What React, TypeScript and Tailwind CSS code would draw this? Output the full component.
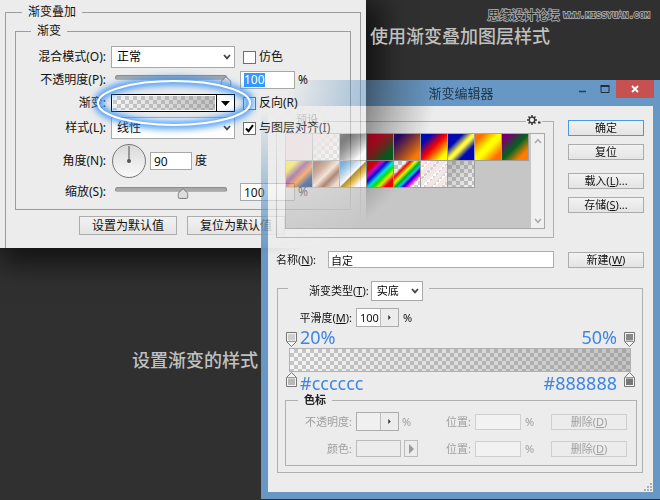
import { useId, useState, type ReactNode } from "react";

const PRESETS = [
  "bg-linear-to-br from-[#f0c9cc] to-[#ece2e2]",
  "bg-[linear-gradient(135deg,#f3e0e0,#f3e0e000),repeating-conic-gradient(#d0d0d0_0_25%,#fff_0_50%)] bg-size-[auto,8px_8px]",
  "bg-linear-to-br from-[#111] from-20% to-white to-80%",
  "bg-[linear-gradient(135deg,#d8001e_30%,#7a2a1e_55%,#00641e_80%)]",
  "bg-[linear-gradient(135deg,#28006e_15%,#8c3c32_48%,#ff7c00_85%)]",
  "bg-[linear-gradient(135deg,#000ab4_20%,#ff0000_50%,#ffff00_85%)]",
  "bg-[linear-gradient(135deg,#000ab4_28%,#fff83c_48%,#fff83c_54%,#000ab4_72%)]",
  "bg-[linear-gradient(135deg,#ff6e00_15%,#ffff00_45%,#ffff00_55%,#ff6e00_85%)]",
  "bg-[linear-gradient(135deg,#78006e_15%,#00641e_50%,#ff7c00_80%)]",
  "bg-[linear-gradient(135deg,#f9e600_20%,#6f157b_42%,#fd7c00_60%,#002874_80%)]",
  "bg-[linear-gradient(135deg,#7a3c20_10%,#b07a60_30%,#fbdcc8_50%,#8a4a30_68%,#f0d4c0_88%)]",
  "bg-[linear-gradient(135deg,#2989cc_10%,#ffffff_48%,#906a00_52%,#d99f00_62%,#ffffff_80%)]",
  "bg-[linear-gradient(135deg,#ff0000_20%,#ff00ff_30%,#0000ff_40%,#00ffff_52%,#00ff00_62%,#ffff00_72%,#ff0000_84%)]",
  "bg-[linear-gradient(135deg,transparent_24%,#ff0000_32%,#ffff00_42%,#00b400_52%,#00c8ff_60%,#0000c8_67%,#dc00dc_74%,transparent_84%),repeating-conic-gradient(#d0d0d0_0_25%,#fff_0_50%)] bg-size-[auto,8px_8px]",
  "bg-[repeating-linear-gradient(135deg,#f5e6e6_0_4px,#f5e6e600_5px_7px),repeating-conic-gradient(#d8d0d0_0_25%,#fff_0_50%)] bg-size-[auto,6px_6px]",
  "bg-[linear-gradient(135deg,#88888899,#cccccc33),repeating-conic-gradient(#c0c0c0_0_25%,#fff_0_50%)] bg-size-[auto,8px_8px]",
];

const editorButton =
  "h-4 w-full border border-[#acacac] bg-linear-to-b from-[#f2f2f2] to-[#e4e4e4] text-[11px] leading-3 text-[#111]";

function Chevron({ className = "" }: { className?: string }) {
  return (
    <svg viewBox="0 0 8 6" className={`pointer-events-none h-[6px] w-2 ${className}`}>
      <path d="M1 1 L4 4.4 L7 1" fill="none" stroke="#444" strokeWidth="1.8" />
    </svg>
  );
}

function PickList({ id, value, className }: { id: string; value: string; className: string }) {
  return (
    <div className={`relative ${className}`}>
      <select
        id={id}
        className="h-full w-full appearance-none border border-[#a8a8a8] bg-white pl-[5px] text-black"
      >
        <option>{value}</option>
      </select>
      <Chevron className="absolute top-1/2 right-1 -translate-y-1/2" />
    </div>
  );
}

function Check({ label, checked = false }: { label: string; checked?: boolean }) {
  return (
    <label className="flex items-center gap-[3px] pl-[3px] whitespace-nowrap">
      <span className="relative size-[13px] shrink-0">
        <input
          type="checkbox"
          defaultChecked={checked}
          className="peer block size-[13px] appearance-none border border-[#707070] bg-white"
        />
        <svg
          viewBox="0 0 13 13"
          className="pointer-events-none absolute inset-0 hidden size-[13px] peer-checked:block"
        >
          <path d="M3 6.5 L5.5 9.2 L10 3.2" fill="none" stroke="#000" strokeWidth="2" />
        </svg>
      </span>
      {label}
    </label>
  );
}

function Slider({ id, initial }: { id: string; initial: number }) {
  const [value, setValue] = useState(initial);
  return (
    <div className="relative mr-2 ml-1 h-4">
      <div className="mt-[3px] h-[5px] rounded-full border border-[#8c8c8c] border-b-[#b4b4b4] bg-[#a9a9a9]" />
      <svg
        viewBox="0 0 11 11"
        className="absolute top-1 size-[11px] -translate-x-1/2"
        style={{ left: `${value}%` }}
      >
        <path d="M5.5 0.6 L10.4 5.4 V9 Q10.4 10.4 9 10.4 H2 Q0.6 10.4 0.6 9 V5.4 Z" fill="#dedede" stroke="#777" />
      </svg>
      <input
        id={id}
        type="range"
        value={value}
        onChange={(e) => setValue(Number(e.target.value))}
        className="absolute inset-0 w-full opacity-0"
      />
    </div>
  );
}

function OverlayPanel() {
  const id = useId();
  return (
    <section className="absolute top-0 left-0 w-[366px] bg-[#ececec] px-[5px] pt-1 text-[12px] leading-4 text-[#111] shadow-[8px_8px_26px_8px_rgba(0,0,0,0.6)]">
      <fieldset className="min-w-0 border border-b-0 border-[#9c9c9c] px-[9px] pb-[13px]">
        <legend className="ml-[7px] px-[6px]">渐变叠加</legend>
        <fieldset className="mt-[3px] min-w-0 border border-[#9c9c9c] pt-[7px] pb-[5px]">
          <legend className="ml-[15px] px-[6px]">渐变</legend>
          <div className="grid grid-cols-[90px_124px_1fr] grid-rows-[22px_24px_22px_28px_38px_24px] items-center gap-x-[5px]">
            <label htmlFor={`${id}-mode`} className="text-right">混合模式(O):</label>
            <PickList id={`${id}-mode`} value="正常" className="h-[22px]" />
            <Check label="仿色" />

            <label htmlFor={`${id}-opacity`} className="text-right">不透明度(P):</label>
            <Slider id={`${id}-opacity`} initial={99} />
            <label className="flex items-center gap-[3px]">
              <span className="flex h-[18px] w-[55px] items-center border border-[#a8a8a8] bg-white pl-[3px]">
                <input
                  aria-label="不透明度"
                  defaultValue="100"
                  className="h-[14px] w-[21px] bg-[#3399ff] text-white"
                />
              </span>
              %
            </label>

            <span className="text-right">渐变:</span>
            <button
              type="button"
              aria-label="渐变"
              className="flex h-[18px] border border-black bg-white outline-none"
            >
              <span className="h-full flex-1 border border-white bg-[linear-gradient(90deg,#cccccc33,#88888880),repeating-conic-gradient(#c8c8c8_0_25%,#fff_0_50%)] bg-size-[auto,8px_8px]" />
              <span className="flex h-full w-[18px] items-center justify-center border-l border-black">
                <svg viewBox="0 0 9 5" className="h-[5px] w-[9px]">
                  <path d="M0 0 H9 L4.5 5 Z" fill="#000" />
                </svg>
              </span>
            </button>
            <Check label="反向(R)" />

            <label htmlFor={`${id}-style`} className="text-right">样式(L):</label>
            <PickList id={`${id}-style`} value="线性" className="h-[22px]" />
            <Check label="与图层对齐(I)" checked />

            <label htmlFor={`${id}-angle`} className="text-right">角度(N):</label>
            <div className="flex items-center gap-[3px] whitespace-nowrap">
              <svg viewBox="0 0 36 36" className="size-9 shrink-0">
                <defs>
                  <linearGradient id="dial" x1="0" y1="0" x2="0" y2="1">
                    <stop offset="0" stopColor="#d9d9d9" />
                    <stop offset="1" stopColor="#fafafa" />
                  </linearGradient>
                </defs>
                <circle cx="18" cy="18" r="16.5" fill="url(#dial)" stroke="#777" />
                <path d="M18 18 V3" stroke="#777" strokeWidth="1.4" />
                <circle cx="18" cy="18" r="2" fill="#555" />
              </svg>
              <input
                id={`${id}-angle`}
                defaultValue="90"
                className="h-[18px] w-[42px] shrink-0 border border-[#a8a8a8] bg-white px-[3px]"
              />
              度
            </div>
            <span />

            <label htmlFor={`${id}-scale`} className="text-right">缩放(S):</label>
            <Slider id={`${id}-scale`} initial={61} />
            <label className="flex items-center gap-[3px]">
              <input
                aria-label="缩放"
                defaultValue="100"
                className="h-[18px] w-[55px] border border-[#a8a8a8] bg-white px-[3px]"
              />
              %
            </label>
          </div>
        </fieldset>
        <div className="mt-[6px] flex gap-[10px] pl-16">
          <button type="button" className="h-[19px] w-[98px] border border-[#acacac] bg-linear-to-b from-[#f2f2f2] to-[#e4e4e4]">
            设置为默认值
          </button>
          <button type="button" className="h-[19px] w-[98px] border border-[#acacac] bg-linear-to-b from-[#f2f2f2] to-[#e4e4e4]">
            复位为默认值
          </button>
        </div>
      </fieldset>

      {/* highlight ring round the gradient picker */}
      <svg viewBox="0 0 190 70" className="pointer-events-none absolute top-[68px] left-[79px] h-[70px] w-[190px]">
        <defs>
          <filter id="glow" x="-20%" y="-40%" width="140%" height="180%">
            <feGaussianBlur stdDeviation="3.5" />
          </filter>
        </defs>
        <ellipse cx="95" cy="35" rx="76" ry="22" fill="none" stroke="#2f8cf5" strokeWidth="7" filter="url(#glow)" />
        <ellipse cx="95" cy="35" rx="76" ry="22" fill="none" stroke="#fff" strokeWidth="2.2" />
      </svg>
    </section>
  );
}

function ColorStop({ color, down = false }: { color: string; down?: boolean }) {
  return (
    <svg viewBox="0 0 11 15" className="h-[15px] w-[11px]">
      <g transform={down ? "matrix(1 0 0 -1 0 15)" : undefined}>
        <path d="M0.5 5.5 L5.5 0.5 L10.5 5.5 V14.5 H0.5 Z" fill="#f4f4f4" stroke="#777" />
        <path d="M0.5 5.5 H10.5" stroke="#999" />
        <rect x="2" y="6.5" width="7" height="6.5" fill={color} />
      </g>
    </svg>
  );
}

function Spinner({ label, value = "", disabled = false }: { label: string; value?: string; disabled?: boolean }) {
  return (
    <span className="flex h-[19px] w-[43px] border border-[#acacac]">
      <input
        aria-label={label}
        defaultValue={value}
        disabled={disabled}
        className={`w-6 border-r border-[#bcbcbc] pl-[3px] ${disabled ? "bg-[#f0f0f0]" : "bg-white"}`}
      />
      <button type="button" aria-label={`${label} ▸`} disabled={disabled} className="flex flex-1 items-center justify-center">
        <svg viewBox="0 0 3 6" className="h-[5px] w-[3px]">
          <path d="M0 0 L3 3 L0 6 Z" fill="#333" />
        </svg>
      </button>
    </span>
  );
}

function StopRow({ label, children }: { label: string; children: ReactNode }) {
  const id = useId();
  return (
    <div className="grid h-[19px] grid-cols-[66px_80px_1fr_46px_22px_76px] items-center gap-1 whitespace-nowrap">
      <span className="text-right">{label}</span>
      <div className="flex items-center gap-[3px]">{children}</div>
      <label htmlFor={id} className="text-right">位置:</label>
      <input id={id} disabled className="h-4 w-full border border-[#cfcfcf] bg-[#f2f2f2]" />
      <span>%</span>
      <button type="button" disabled className="h-4 border border-[#cfcfcf] text-[11px] leading-3">
        删除(<u>D</u>)
      </button>
    </div>
  );
}

function GradientEditor() {
  const id = useId();
  return (
    <section className="absolute top-20 right-0 left-[261px] bg-[#6798c5] px-[7px] pb-[7px] text-[11px] leading-[14px] text-[#111] [mask-image:radial-gradient(circle_at_0_0,transparent_30px,black_175px)]">
      <header className="relative -mr-px flex h-[26px] items-start justify-end">
        <h2 className="absolute inset-x-0 top-[5px] text-center text-[13px] leading-4 text-[#1f3346]">
          渐变编辑器
        </h2>
        <button type="button" aria-label="最小化" className="flex h-[18px] w-[26px] items-center justify-center">
          <svg viewBox="0 0 10 10" className="size-[10px]">
            <path d="M1 7.5 H8" stroke="#26445f" strokeWidth="1.6" />
          </svg>
        </button>
        <button type="button" aria-label="最大化" className="flex h-[18px] w-[18px] items-center justify-center">
          <svg viewBox="0 0 10 10" className="size-[10px]">
            <path d="M1 2.5 H9 V8.5 H1 Z" fill="none" stroke="#1d2f40" />
            <path d="M0.5 2 H9.5" stroke="#1d2f40" strokeWidth="2" />
          </svg>
        </button>
        <button type="button" aria-label="关闭" className="ml-[2px] flex h-[18px] w-[38px] items-center justify-center bg-[#c75050]">
          <svg viewBox="0 0 8 8" className="size-2">
            <path d="M1 1 L7 7 M7 1 L1 7" stroke="#fff" strokeWidth="1.8" />
          </svg>
        </button>
      </header>

      <div className="relative bg-[#ececec] pt-[7px] pr-[9px] pb-[19px] pl-2">
        <div className="flex gap-[14px]">
          <fieldset className="relative min-w-0 flex-1 border border-[#b0b0b0] px-2 pt-1 pb-2">
            <legend className="ml-[6px] h-4 px-[5px]">预设</legend>
            <button
              type="button"
              aria-label="预设选项"
              className="absolute -top-[15px] right-[11px] flex items-end bg-[#ececec] px-px"
            >
              <svg viewBox="0 0 14 12" className="h-3 w-[14px]">
                <circle cx="5" cy="6" r="2.8" fill="none" stroke="#333" strokeWidth="1.3" />
                <path
                  d="M5 1 V3 M5 9 V11 M0 6 H2 M8 6 H10 M1.5 2.5 L3 4 M7 8 L8.5 9.5 M8.5 2.5 L7 4 M3 8 L1.5 9.5"
                  stroke="#333"
                  strokeWidth="1.5"
                />
                <rect x="11" y="7.5" width="2.5" height="2" fill="#333" />
              </svg>
            </button>
            <div className="flex h-24 border border-[#a8a8a8] bg-[#c6c6c6]">
              <div className="flex flex-1 flex-wrap content-start">
                {PRESETS.map((fill) => (
                  <button
                    key={fill}
                    type="button"
                    aria-label="预设"
                    className={`size-[27px] border-r border-b border-[#a0a0a0] ${fill}`}
                  />
                ))}
              </div>
              <div className="flex w-[13px] flex-col items-center justify-between bg-[#f0f0f0] py-1">
                <svg viewBox="0 0 8 6" className="h-[6px] w-2">
                  <path d="M1 5 L4 1.6 L7 5" fill="none" stroke="#aaa" strokeWidth="1.6" />
                </svg>
                <svg viewBox="0 0 8 6" className="h-[6px] w-2">
                  <path d="M1 1 L4 4.4 L7 1" fill="none" stroke="#aaa" strokeWidth="1.6" />
                </svg>
              </div>
            </div>
          </fieldset>
          <div className="flex w-[76px] flex-col gap-2 pt-[7px]">
            <button type="button" className="h-4 border border-[#4a98e8] bg-linear-to-b from-[#f2f2f2] to-[#e4e4e4] text-[11px] leading-3">
              确定
            </button>
            <button type="button" className={editorButton}>复位</button>
            <button type="button" className={`mt-[5px] ${editorButton}`}>载入(<u>L</u>)...</button>
            <button type="button" className={editorButton}>存储(<u>S</u>)...</button>
          </div>
        </div>

        <div className="mt-[13px] flex items-center gap-[14px]">
          <div className="flex flex-1 items-center">
            <label htmlFor={`${id}-name`} className="w-[52px]">
              名称(<u>N</u>):
            </label>
            <input
              id={`${id}-name`}
              defaultValue="自定"
              className="h-[17px] min-w-0 flex-1 border border-[#acacac] bg-white px-[2px]"
            />
          </div>
          <div className="w-[76px]">
            <button type="button" className={editorButton}>新建(<u>W</u>)</button>
          </div>
        </div>

        <fieldset className="mt-[7px] mr-px ml-px min-w-0 border border-[#b0b0b0] pt-[7px] pr-[5px] pb-[6px] pl-[7px]">
          <legend className="ml-[3px] flex h-[26px] items-end gap-[2px] pr-[6px] pl-[21px]">
            <label htmlFor={`${id}-type`} className="pb-[3px]">
              渐变类型(<u>T</u>):
            </label>
            <PickList id={`${id}-type`} value="实底" className="h-5 w-[52px]" />
          </legend>
          <div className="flex items-center gap-1">
            <span className="w-[67px] text-right">
              平滑度(<u>M</u>):
            </span>
            <Spinner label="平滑度" value="100" />
            <span>%</span>
          </div>

          <div className="flex h-5 items-end justify-between pr-[2px] pl-px text-[18px] leading-5 text-[#3f86e4]">
            <span className="flex items-end gap-[3px]">
              <ColorStop color="#cfcfcf" down />
              20%
            </span>
            <span className="flex items-end gap-[7px]">
              50%
              <ColorStop color="#888888" down />
            </span>
          </div>
          <div className="mt-px mr-[6px] ml-1 h-6 border border-[#b0b0b0] bg-[linear-gradient(90deg,#cccccc33,#88888880),repeating-conic-gradient(#c4c4c4_0_25%,#fff_0_50%)] bg-size-[auto,8px_8px]" />
          <div className="flex h-[21px] items-start justify-between pr-[2px] pl-px text-[18px] leading-[22px] text-[#3f86e4]">
            <span className="flex items-start gap-[3px]">
              <ColorStop color="#b8b8b8" />
              #cccccc
            </span>
            <span className="flex items-start gap-[7px]">
              #888888
              <ColorStop color="#777777" />
            </span>
          </div>

          <fieldset className="min-w-0 border border-[#b0b0b0] pt-[5px] pr-[9px] pb-[7px] text-[#a0a0a0]">
            <legend className="ml-3 px-[6px] font-bold text-[#222]">色标</legend>
            <div className="flex flex-col gap-2">
              <StopRow label="不透明度:">
                <Spinner label="不透明度" disabled />
                <span>%</span>
              </StopRow>
              <StopRow label="颜色:">
                <button type="button" aria-label="颜色" disabled className="h-[17px] w-[45px] border border-[#bcbcbc]" />
                <button type="button" aria-label="颜色 ▸" disabled className="flex h-[17px] w-[14px] items-center justify-center border border-[#bcbcbc]">
                  <svg viewBox="0 0 5 10" className="h-[10px] w-[5px]">
                    <path d="M0 0 L5 5 L0 10 Z" fill="#9a9a9a" />
                  </svg>
                </button>
              </StopRow>
            </div>
          </fieldset>
        </fieldset>

        <svg viewBox="0 0 8 8" className="absolute right-px bottom-px size-2">
          <path d="M6 0h2v2h-2z M6 3h2v2h-2z M6 6h2v2h-2z M3 3h2v2h-2z M3 6h2v2h-2z M0 6h2v2h-2z" fill="#b0b0b0" />
        </svg>
      </div>
    </section>
  );
}

export default function App() {
  return (
    <main className="relative min-h-screen w-full overflow-hidden bg-[#303030] font-['Noto_Sans','Noto_Sans_CJK_SC',sans-serif]">
      <OverlayPanel />
      <div className="relative ml-[366px] pt-2 pl-1">
        <p className="flex items-center justify-end gap-1 pr-[10px] text-[12px] leading-4 whitespace-nowrap text-[#222] [paint-order:stroke] [-webkit-text-stroke:2px_#a0a0a0]">
          思缘设计论坛
          <span className="font-['Liberation_Mono',monospace] text-[9px]">WWW.MISSYUAN.COM</span>
        </p>
        <h1 className="text-[18px] leading-6 font-medium text-[#c0c0c0]">使用渐变叠加图层样式</h1>
      </div>
      <p className="mt-[300px] ml-[132px] text-[18px] leading-6 font-medium text-[#c0c0c0]">
        设置渐变的样式
      </p>
      <GradientEditor />
    </main>
  );
}
